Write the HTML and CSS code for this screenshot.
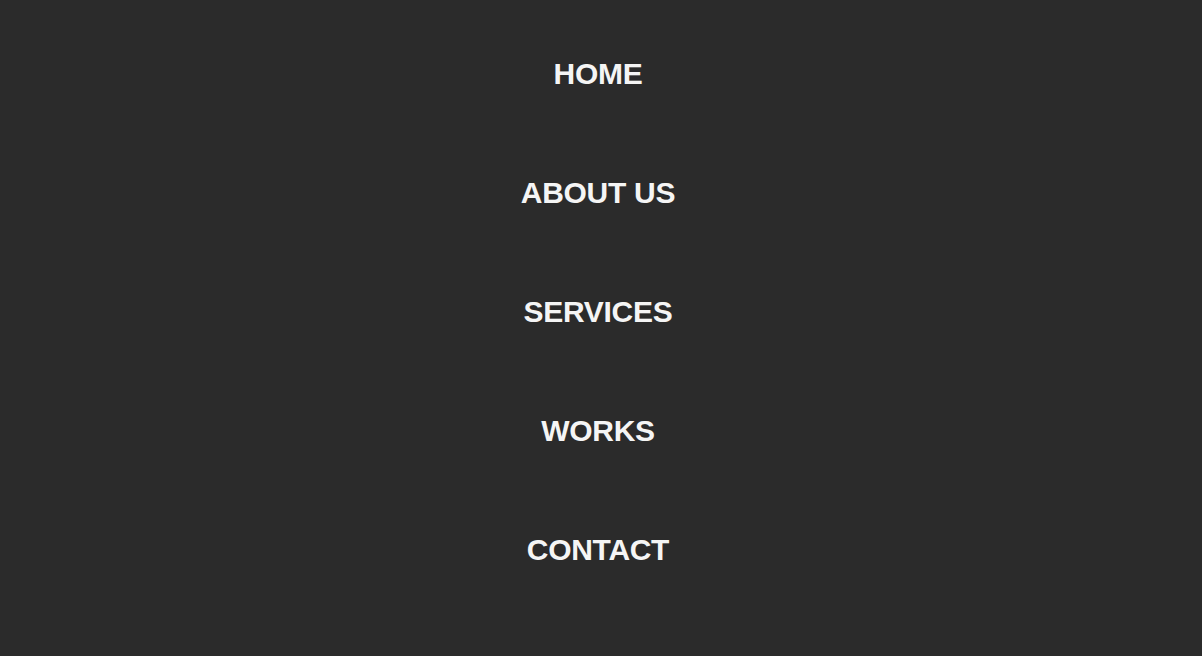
FILE: index.html
```html
<!DOCTYPE html>
<html lang="en">
<head>
<meta charset="utf-8">
<title>Menu</title>
<link rel="stylesheet" href="styles.css">
</head>
<body>
<nav class="menu">
  <ul class="menu-list">
    <li class="menu-item"><a class="menu-link" href="#">HOME</a></li>
    <li class="menu-item"><a class="menu-link" href="#">ABOUT US</a></li>
    <li class="menu-item"><a class="menu-link" href="#">SERVICES</a></li>
    <li class="menu-item"><a class="menu-link" href="#">WORKS</a></li>
    <li class="menu-item"><a class="menu-link" href="#">CONTACT</a></li>
  </ul>
</nav>
</body>
</html>
```
FILE: styles.css
```css
html, body {
  margin: 0;
  padding: 0;
  height: 100%;
  background: #2b2b2b;
}
body {
  font-family: "Liberation Sans", Arial, Helvetica, sans-serif;
}
.menu {
  padding: 14px 6px 0 0;
}
.menu-list {
  list-style: none;
  margin: 0;
  padding: 0;
  display: flex;
  flex-direction: column;
  align-items: center;
}
.menu-item {
  line-height: 119px;
  height: 119px;
}
.menu-link {
  color: #f5f5f5;
  text-decoration: none;
  font-size: 30px;
  font-weight: 700;
  letter-spacing: -0.3px;
}
```
